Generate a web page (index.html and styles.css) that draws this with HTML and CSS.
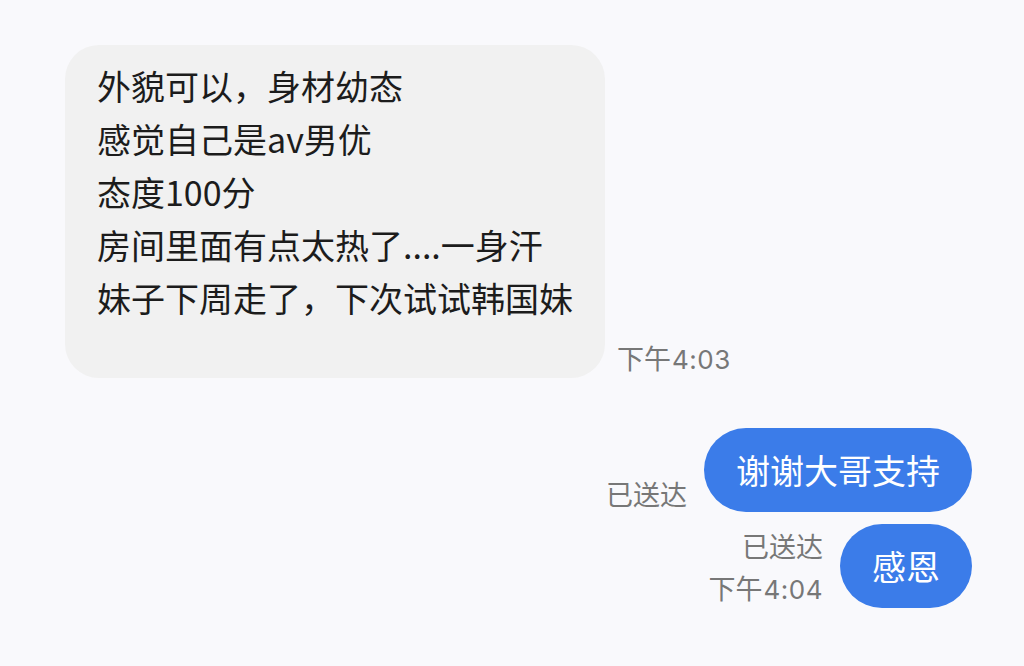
FILE: index.html
```html
<!DOCTYPE html>
<html lang="zh-CN">
<head>
<meta charset="utf-8">
<link rel="stylesheet" href="styles.css">
</head>
<body>
<div class="chat">
  <div class="row in">
    <div class="bubble grey">
      <div>外貌可以，身材幼态</div>
      <div>感觉自己是av男优</div>
      <div>态度100分</div>
      <div>房间里面有点太热了....一身汗</div>
      <div>妹子下周走了，下次试试韩国妹</div>
    </div>
    <div class="meta">下午<span class="num">4:03</span></div>
  </div>
  <div class="row out first">
    <div class="meta right">已送达</div>
    <div class="bubble blue">谢谢大哥支持</div>
  </div>
  <div class="row out second">
    <div class="meta right stack">
      <div>已送达</div>
      <div>下午<span class="num">4:04</span></div>
    </div>
    <div class="bubble blue">感恩</div>
  </div>
</div>
</body>
</html>
```
FILE: styles.css
```css
html, body {
  margin: 0;
  padding: 0;
  background: #f9f9fc;
}
body {
  font-family: "Noto Sans CJK SC", "Noto Sans", sans-serif;
  width: 1024px;
  height: 666px;
  overflow: hidden;
}
.chat {
  display: flex;
  flex-direction: column;
  padding: 45px 52px 0 65px;
}
.row {
  display: flex;
  align-items: flex-end;
}
.row.in {
  gap: 12px;
}
.row.out {
  justify-content: flex-end;
  gap: 17px;
}
.row.first {
  margin-top: 50px;
}
.row.second {
  margin-top: 12px;
}
.bubble {
  font-size: 34px;
  line-height: 53px;
  flex-shrink: 0;
}
.bubble.grey {
  background: #f1f1f1;
  color: #1c1c1c;
  border-radius: 34px;
  padding: 14px 32px 54px 32px;
}
.bubble.blue {
  background: #3b7ce9;
  color: #ffffff;
  border-radius: 42px;
  padding: 16px 32px;
  line-height: 52px;
}
.meta {
  font-size: 27px;
  line-height: 36px;
  color: #777777;
  white-space: nowrap;
  flex-shrink: 0;
}
.meta.right {
  text-align: right;
}
.num {
  font-family: Inter, "Noto Sans CJK SC", sans-serif;
  font-size: 26px;
  letter-spacing: 0.5px;
  margin-left: 1px;
}
.stack {
  display: flex;
  flex-direction: column;
  gap: 6px;
}
```
